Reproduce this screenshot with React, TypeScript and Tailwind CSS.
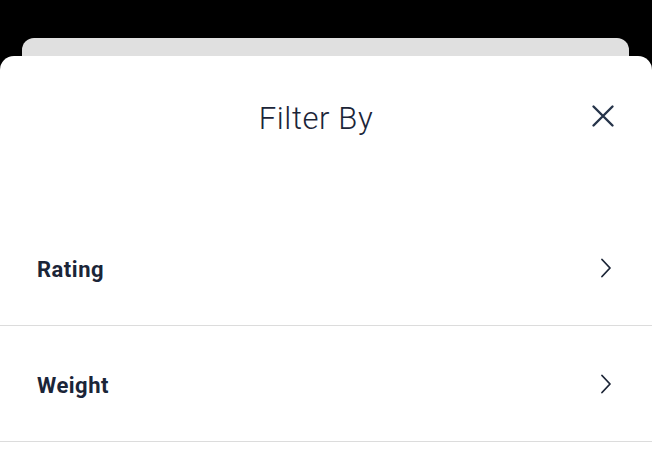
import React from "react";

const FILTERS = ["Rating", "Weight"];

function Chevron() {
  return (
    <svg width="12" height="20" viewBox="0 0 12 20" fill="none" className="shrink-0">
      <path d="M2 1.5 L10 10 L2 18.5" stroke="#1b2436" strokeWidth="1.8" strokeLinecap="round" strokeLinejoin="round" />
    </svg>
  );
}

export default function App() {
  return (
    <div className="h-[460px] w-full overflow-hidden bg-black" style={{ fontFamily: "Roboto, 'Noto Sans', sans-serif" }}>
      {/* the sheet behind */}
      <div className="h-[56px] pl-[22px] pr-[23px] pt-[38px]">
        <div className="h-[18px] rounded-t-[12px] bg-[#e0e0e0]" />
      </div>

      {/* filter sheet */}
      <div className="h-[404px] rounded-t-[14px] bg-white">
        <div className="grid h-[124px] grid-cols-[1fr_auto_1fr] items-center pr-[20px]">
          <div />
          <h1 className="mt-[2px] text-[31px] font-light tracking-[0.6px] text-[#1b2538]">Filter By</h1>
          <div className="-mr-[20px] flex justify-end pr-[37px]">
            <button aria-label="Close" className="-mt-[4px]">
              <svg width="24" height="24" viewBox="0 0 24 24" fill="none">
                <path d="M2.5 2.5 L21.5 21.5 M21.5 2.5 L2.5 21.5" stroke="#26344a" strokeWidth="2.4" strokeLinecap="round" />
              </svg>
            </button>
          </div>
        </div>

        <div className="mt-[30px]">
          {FILTERS.map((f) => (
            <div key={f} className="flex h-[116px] items-center justify-between border-b border-[#dcdcdc] pl-[37px] pr-[40px]">
              <span className="mt-[3px] text-[22px] font-bold tracking-[0.5px] text-[#1b2538]">{f}</span>
              <Chevron />
            </div>
          ))}
        </div>
      </div>
    </div>
  );
}
